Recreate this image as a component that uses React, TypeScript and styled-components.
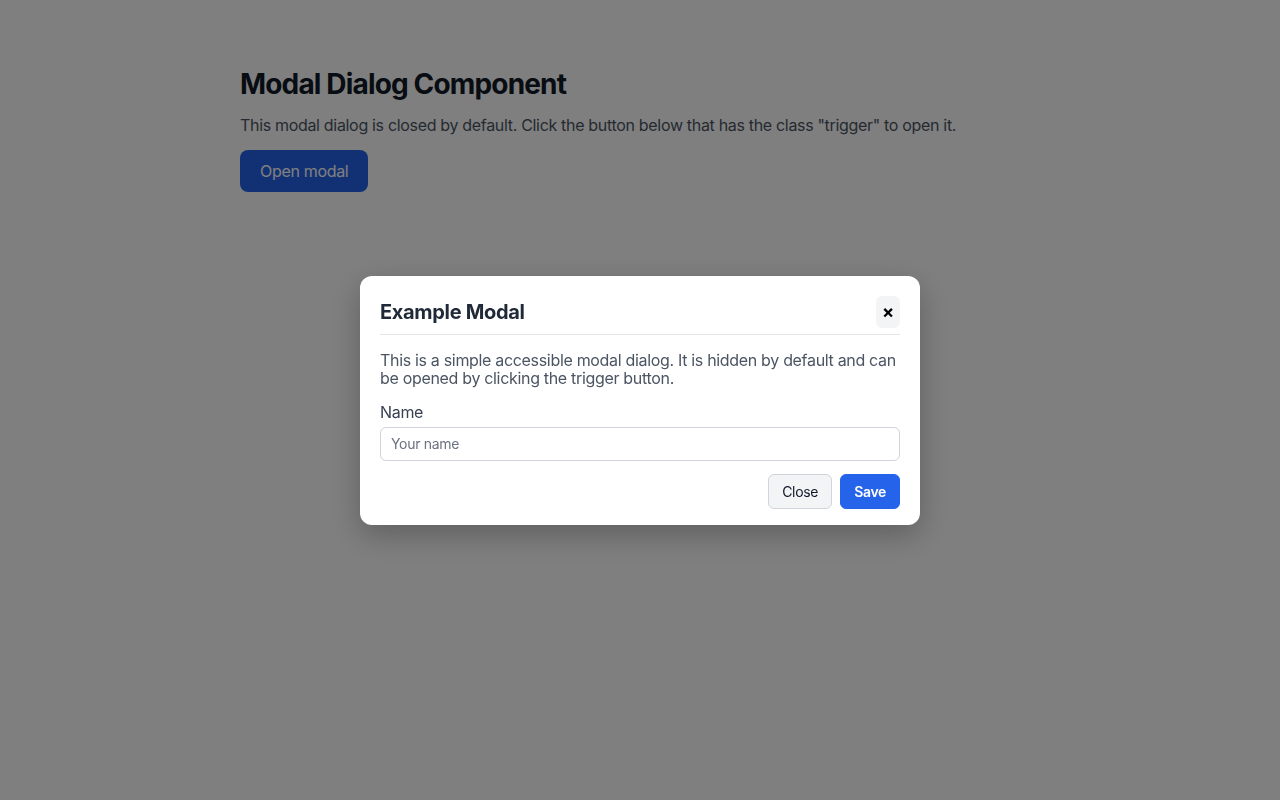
import React from 'react';
import styled, { createGlobalStyle } from 'styled-components';

const GlobalStyle = createGlobalStyle`
    html, body {
        margin : 0;
        padding : 0;
        background : #ffffff;
        font-family : Inter, "Liberation Sans", Arial, sans-serif;
        letter-spacing : -0.02em;
    }

    button, input {
        letter-spacing : inherit;
    }
`

const App: React.FC = () => {
    return (
        <>
            <GlobalStyle />
            <Page>
                <Title>Modal Dialog Component</Title>
                <Intro>This modal dialog is closed by default. Click the button below that has the class "trigger" to open it.</Intro>
                <TriggerButton className='trigger'>Open modal</TriggerButton>
            </Page>

            <Overlay>
                <Dialog role='dialog' aria-modal='true' aria-labelledby='modal-title'>
                    <DialogHeader>
                        <DialogTitle id='modal-title'>Example Modal</DialogTitle>
                        <CloseIcon aria-label='Close'>×</CloseIcon>
                    </DialogHeader>
                    <DialogText>
                        This is a simple accessible modal dialog. It is hidden by default and can be opened by clicking the trigger button.
                    </DialogText>
                    <Field>
                        <Label htmlFor='name'>Name</Label>
                        <Input id='name' placeholder='Your name' />
                    </Field>
                    <Footer>
                        <ActionButton>Close</ActionButton>
                        <ActionButton primary>Save</ActionButton>
                    </Footer>
                </Dialog>
            </Overlay>
        </>
    );
};

export default App;

const Page = styled.main`
    max-width : 800px;
    margin : 0 auto;
    padding : 48px 0;
`

const Title = styled.h1`
    margin : 20px 0 11px;
    font-size : 28px;
    line-height : 1.2;
    font-weight : 700;
    letter-spacing : -0.03em;
    color : #111827;
`

const Intro = styled.p`
    margin : 0 0 13px;
    font-size : 16px;
    line-height : 1.5;
    color : #4b5563;
`

const TriggerButton = styled.button`
    font-family : inherit;
    font-size : 16px;
    height : 42px;
    padding : 0 20px;
    border : none;
    border-radius : 8px;
    background : #2563eb;
    color : #ffffff;
    cursor : pointer;
`

const Overlay = styled.div`
    position : fixed;
    inset : 0;
    background : rgba(0, 0, 0, 0.5);
    display : flex;
    align-items : center;
    justify-content : center;
`

const Dialog = styled.div`
    width : 560px;
    box-sizing : border-box;
    background : #ffffff;
    border-radius : 12px;
    padding : 20px 20px 16px;
    box-shadow : 0 10px 30px rgba(0, 0, 0, 0.25);
    display : flex;
    flex-direction : column;
`

const DialogHeader = styled.div`
    display : flex;
    align-items : center;
    justify-content : space-between;
    padding-bottom : 6px;
    border-bottom : 1px solid #e5e7eb;
`

const DialogTitle = styled.h2`
    margin : 0;
    font-size : 20px;
    font-weight : 700;
    color : #1f2937;
`

const CloseIcon = styled.button`
    width : 24px;
    height : 32px;
    padding : 0;
    border : none;
    border-radius : 6px;
    background : #f3f4f6;
    color : #000000;
    font-family : inherit;
    font-size : 18px;
    font-weight : 700;
    line-height : 1;
    cursor : pointer;
`

const DialogText = styled.p`
    margin : 16px 0 0;
    font-size : 16px;
    line-height : 18px;
    color : #4b5563;
`

const Field = styled.div`
    display : flex;
    flex-direction : column;
    gap : 6px;
    margin-top : 16px;
`

const Label = styled.label`
    font-size : 16px;
    line-height : 18px;
    color : #374151;
`

const Input = styled.input`
    height : 34px;
    box-sizing : border-box;
    padding : 0 10px;
    border : 1px solid #d1d5db;
    border-radius : 6px;
    font-family : inherit;
    font-size : 14px;
    color : #111827;

    &::placeholder {
        color : #6b7280;
    }
`

const Footer = styled.div`
    display : flex;
    justify-content : flex-end;
    gap : 8px;
    margin-top : 13px;
`

const ActionButton = styled.button<{ primary?: boolean }>`
    height : 35px;
    padding : 0 13px;
    border-radius : 6px;
    border : 1px solid ${p => p.primary ? '#2563eb' : '#d1d5db'};
    background : ${p => p.primary ? '#2563eb' : '#f3f4f6'};
    color : ${p => p.primary ? '#ffffff' : '#111827'};
    font-family : inherit;
    font-size : 14px;
    font-weight : ${p => p.primary ? 600 : 400};
    cursor : pointer;
`
